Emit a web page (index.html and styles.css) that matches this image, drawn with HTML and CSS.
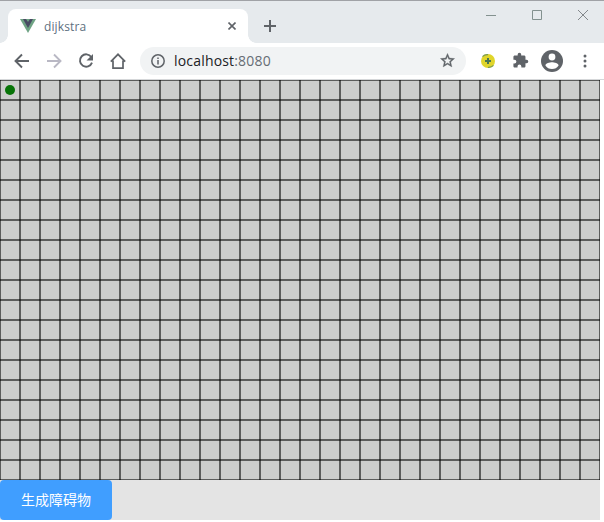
FILE: index.html
```html
<!DOCTYPE html>
<html lang="zh">
<head>
<meta charset="utf-8">
<title>dijkstra</title>
<link rel="stylesheet" href="styles.css">
</head>
<body>
<div class="browser">
  <header class="tabs">
    <div class="tab">
      <svg class="vue" width="16" height="14" viewBox="0 0 16 14"><path fill="#6fa384" d="M0 0h16L8 14z"/><path fill="#494b63" d="M3 0h3l2 3 2-3h3L8 9z"/></svg>
      <span class="title">dijkstra</span>
      <svg class="close" width="8" height="8" viewBox="0 0 8 8" fill="none" stroke="#5f6368" stroke-width="1.6"><path d="M.5.5l7 7M7.5.5l-7 7"/></svg>
    </div>
    <svg class="plus" width="12" height="12" viewBox="0 0 12 12" fill="none" stroke="#5f6368" stroke-width="2"><path d="M0 6h12M6 0v12"/></svg>
    <div class="controls">
      <svg width="10" height="10" viewBox="0 0 10 10" fill="none" stroke="#83918f"><path d="M0 5.5h10"/></svg>
      <svg width="10" height="10" viewBox="0 0 10 10" fill="none" stroke="#83918f"><path d="M.5.5h9v9h-9z"/></svg>
      <svg width="10" height="10" viewBox="0 0 10 10" fill="none" stroke="#83878b"><path d="M0 0l10 10M10 0L0 10"/></svg>
    </div>
  </header>
  <nav class="toolbar">
    <svg class="nav" viewBox="0 0 16 16"><path d="M15 8H2M8 1.5L1.5 8 8 14.5"/></svg>
    <svg class="nav muted" viewBox="0 0 16 16"><path d="M1 8h13M8 1.5L14.500 8 8 14.500"/></svg>
    <svg class="nav" viewBox="0 0 16 16"><path d="M13.300 4A6.200 6.200 0 1 0 14 9.700"/><path class="solid" d="M15 1v6.500H8.500z"/></svg>
    <svg class="nav home" viewBox="0 0 16 16"><path d="M.8 8.700L8 1.300l7.200 7.400M3 7.500v7.700h10V7.500"/></svg>
    <div class="address">
      <svg width="14" height="14" viewBox="0 0 14 14" fill="none" stroke="#5f6368" stroke-width="1.500"><circle cx="7" cy="7" r="6.200"/><path d="M7 6v4.500M7 3.400V5"/></svg>
      <span class="url">localhost<span class="port">:8080</span></span>
      <svg class="star" width="17" height="17" viewBox="0 0 24 24" fill="#5f6368" stroke="#5f6368" stroke-width=".5"><path d="M22 9.240l-7.190-.62L12 2 9.190 8.630 2 9.240l5.460 4.730L5.820 21 12 17.270 18.180 21l-1.630-7.030L22 9.240zM12 15.400l-3.760 2.270 1-4.280-3.320-2.880 4.380-.38L12 6.100l1.710 4.040 4.380.38-3.320 2.880 1 4.280L12 15.400z"/></svg>
    </div>
    <svg class="ext" width="14" height="14" viewBox="0 0 14 14"><circle cx="7" cy="7" r="7" fill="#e0d52b"/><path d="M1.500 2.600Q3.500.4 7 .7M12.500 11.400q-2 2.200-5.500 1.900" fill="none" stroke="#7a9a50" stroke-width="1.200"/><path d="M7 4v6M4 7h6" stroke="#477552" stroke-width="2"/></svg>
    <svg class="puzzle" width="17" height="17" viewBox="0 0 24 24" fill="#5f6368"><path d="M20.500 11H19V7c0-1.100-.9-2-2-2h-4V3.500a2.500 2.500 0 0 0-5 0V5H4c-1.100 0-1.990.9-1.990 2v3.800H3.500a2.700 2.700 0 0 1 0 5.400H2V20c0 1.100.9 2 2 2h3.800v-1.500a2.700 2.700 0 0 1 5.400 0V22H17c1.100 0 2-.9 2-2v-4h1.500a2.500 2.500 0 0 0 0-5z"/></svg>
    <svg class="avatar" width="22" height="22" viewBox="0 0 22 22"><circle cx="11" cy="11" r="11" fill="#5f6368"/><circle cx="11" cy="7" r="3.400" fill="#fff"/><path d="M4.400 15.500c0-2.200 4.400-3.300 6.600-3.300s6.600 1.100 6.600 3.300A7.900 7.900 0 0 1 11 19a7.900 7.900 0 0 1-6.600-3.500z" fill="#fff"/></svg>
    <svg class="more" width="4" height="14" viewBox="0 0 4 14" fill="#5f6368"><circle cx="2" cy="2" r="1.500"/><circle cx="2" cy="7" r="1.500"/><circle cx="2" cy="12" r="1.500"/></svg>
  </nav>
  <main class="page">
    <div class="board"><span class="dot"></span></div>
    <button class="generate">生成障碍物</button>
  </main>
</div>
</body>
</html>
```
FILE: styles.css
```css
* { box-sizing: border-box; }
body { margin: 0; background: #fff; font-family: "Open Sans", "Noto Sans CJK SC", sans-serif; }
svg { display: block; flex: none; }
.browser { width: 604px; height: 520px; background: #fff; }
.tabs { display: flex; height: 43px; padding: 8px 16px 0 8px; border-top: 1px solid #a0a2a6; background: #e6eaed; }
.tab { position: relative; display: flex; align-items: center; width: 240px; height: 34px; padding: 0 12px; border-radius: 8px 8px 0 0; background: #fff; }
.tab::before, .tab::after { content: ""; position: absolute; bottom: 0; width: 8px; height: 8px; }
.tab::before { left: -8px; background: radial-gradient(circle at 0 0, transparent 7.500px, #fff 8px); }
.tab::after { right: -8px; background: radial-gradient(circle at 100% 0, transparent 7.500px, #fff 8px); }
.title { margin: 2px 0 0 8px; font-size: 12px; line-height: 16px; letter-spacing: .12px; color: #5d7080; }
.close { margin-left: auto; }
.plus { margin: 11px 0 0 16px; }
.controls { display: flex; gap: 36px; margin: 1px 0 0 auto; }
.toolbar { display: flex; align-items: center; height: 37px; padding: 0 17px 1px 14px; border-bottom: 1px solid #d5d7d9; background: #fff; }
.nav { width: 16px; height: 16px; margin-right: 16px; fill: none; stroke: #5f6368; stroke-width: 1.900; }
.home { stroke-width: 1.700; }
.nav .solid { fill: #5f6368; stroke: none; }
.muted { stroke: #b9b8c4; }
.address { display: flex; align-items: center; width: 326px; height: 28px; margin-left: -2px; padding: 0 10px 0 11px; border-radius: 14px; background: #f1f3f4; }
.url { margin-left: 9px; font-size: 14px; line-height: 20px; letter-spacing: .18px; color: #202124; }
.port { color: #666d74; }
.star { margin-left: auto; }
.ext { margin-left: 15px; }
.puzzle { margin-left: 17px; }
.avatar { margin-left: 12px; }
.more { margin-left: auto; }
.page { width: 600px; height: 440px; background: #e4e4e4; }
.board { width: 600px; height: 400px; padding: 5px; background-color: #cdcecd; background-position: -1px -1px; background-size: 20px 20px; background-image: linear-gradient(rgba(0,0,0,.55) 2px, transparent 2px), linear-gradient(90deg, rgba(0,0,0,.55) 2px, transparent 2px); }
.dot { display: block; width: 10px; height: 10px; border-radius: 50%; background: #087408; }
.generate { display: block; width: 112px; height: 40px; padding: 0; border: 0; border-radius: 4px; background: #409eff; color: #fff; font: 14px/38px "Noto Sans CJK SC", sans-serif; }
.generate { padding-bottom: 2px; }
```
